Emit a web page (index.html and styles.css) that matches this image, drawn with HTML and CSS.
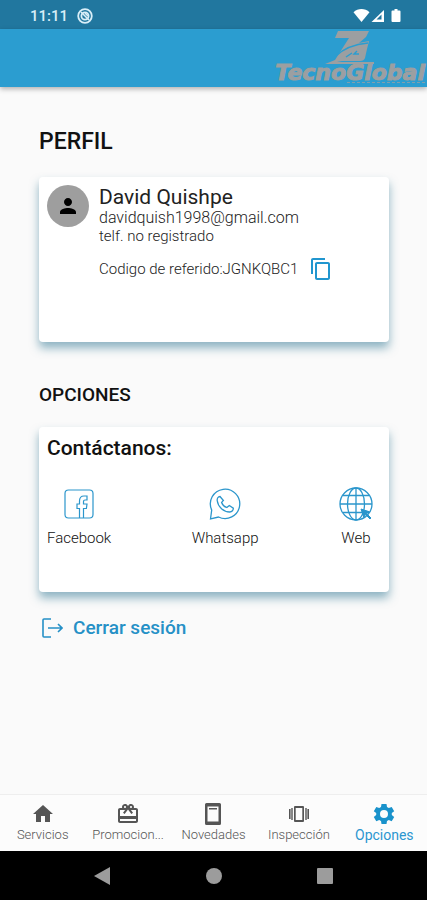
FILE: index.html
```html
<!DOCTYPE html>
<html lang="es">
<head>
<meta charset="utf-8">
<meta name="viewport" content="width=device-width, initial-scale=1">
<title>TecnoGlobal</title>
<link rel="stylesheet" href="styles.css">
</head>
<body>
<div class="status">
  <span class="clock">11:11</span>
  <svg class="status-dnd" viewBox="0 0 16 16" width="16" height="16" aria-hidden="true"><circle cx="8" cy="8" r="6.8" fill="none" stroke="currentColor" stroke-width="1.8"/><circle cx="8" cy="8" r="3.6" fill="none" stroke="currentColor" stroke-width="1.8"/><path d="M4 4l8 8M8 5l3 3" stroke="currentColor" stroke-width="1.6"/></svg>
  <svg class="status-icons" viewBox="0 0 48 16" width="48" height="16" aria-hidden="true"><path d="M.5 4.200C5-.1 12-.1 16.500 4.200L8.500 14z" fill="currentColor"/><path d="M31 2v12H18.500z" fill="currentColor"/><path d="M28.500 6.500v5h-5z" fill="#21779f"/><path d="M39.500 2.500h2V1h3v1.500h2q1 0 1 1V13q0 1-1 1h-7q-1 0-1-1V3.500q0-1 1-1z" fill="currentColor"/></svg>
</div>
<header class="appbar">
  <div class="brand">
    <svg class="brand-mark" viewBox="0 0 52 34" width="52" height="34" aria-hidden="true"><path fill="currentColor" d="M14 1h31l-3 6-7 6 10-2-2 8-2 9q-1 3-5 3H18l-5 1h37v2H1l10-4 14-22H11z"/><path d="M12 26Q23 15 44 13M33 21l-3 3h5M22 27l6-4" fill="none" stroke="#2b9dd0" stroke-width="1.400"/></svg>
    <span class="brand-name">TecnoGlobal</span>
    <span class="brand-line" aria-hidden="true"></span>
  </div>
</header>
<main class="content">
  <h1 class="title">PERFIL</h1>
  <section class="card profile">
    <div class="avatar"><svg viewBox="0 0 24 24" width="24" height="24" aria-hidden="true"><path fill="currentColor" d="M12 12c2.210 0 4-1.790 4-4s-1.790-4-4-4-4 1.790-4 4 1.790 4 4 4zm0 2c-2.670 0-8 1.340-8 4v2h16v-2c0-2.660-5.330-4-8-4z"/></svg></div>
    <div class="details">
      <div class="name">David Quishpe</div>
      <div class="email">davidquish1998@gmail.com</div>
      <div class="phone">telf. no registrado</div>
      <div class="referral"><span>Codigo de referido:JGNKQBC1</span>
        <button class="copy" aria-label="Copiar código"><svg viewBox="0 0 24 24" width="24" height="24" aria-hidden="true"><path fill="currentColor" d="M16 1H4c-1.100 0-2 .9-2 2v14h2V3h12V1zm3 4H8c-1.100 0-2 .9-2 2v14c0 1.100.9 2 2 2h11c1.100 0 2-.9 2-2V7c0-1.100-.9-2-2-2zm0 16H8V7h11v14z"/></svg></button>
      </div>
    </div>
  </section>
  <h2 class="subtitle">OPCIONES</h2>
  <section class="card contact">
    <h3 class="contact-title">Contáctanos:</h3>
    <div class="links">
      <a class="link" href="#facebook"><svg viewBox="0 0 34 34" width="34" height="34" fill="none" stroke="currentColor" stroke-width="1.200" aria-hidden="true"><rect x="3" y="3" width="28" height="28" rx="3.500"/><path d="M17.500 31V21.500H15V17h2.500v-3c0-3.500 2-5 4.500-5h3v4h-2c-1 0-1.500.5-1.500 1.500V17H25l-.6 4.500h-2.900V31"/></svg><span>Facebook</span></a>
      <a class="link" href="#whatsapp"><svg viewBox="0 0 34 34" width="34" height="34" fill="none" stroke="currentColor" stroke-width="1.300" aria-hidden="true"><path d="M2.500 32l1.200-9A14.700 14.700 0 1 1 10.500 30z"/><path d="M12 9.500c-2 0-3 2-2.800 4 .8 6.500 6.500 11.500 12.600 11.500 2.200 0 3.700-2 3.500-3.800l-4-2.700-2.500 2c-2.500-.8-4.300-2.700-5.200-5.100l1.800-1.900z"/></svg><span>Whatsapp</span></a>
      <a class="link" href="#web"><svg viewBox="0 0 34 34" width="34" height="34" fill="none" stroke="currentColor" stroke-width="1.300" aria-hidden="true"><circle cx="17" cy="17" r="16"/><ellipse cx="17" cy="17" rx="8.500" ry="16"/><path d="M17 1v32M1 17h32M4 8.500h26M4 25.500h26"/><path d="M22 22l8.500 2.800-3 1.700 4.500 4.500-1 1-4.500-4.500-1.700 3z" fill="currentColor" stroke-width="1"/></svg><span>Web</span></a>
    </div>
  </section>
  <a class="logout" href="#salir"><svg viewBox="0 0 24 24" width="24" height="24" fill="none" stroke="currentColor" stroke-width="1.600" aria-hidden="true"><path d="M12 3H5Q4 3 4 4v16q0 1 1 1h7M9 12h14M19 8l4 4-4 4"/></svg><span>Cerrar sesión</span></a>
</main>
<nav class="tabs">
  <a class="tab" href="#servicios"><svg viewBox="0 0 24 24" width="24" height="24" aria-hidden="true"><path fill="currentColor" d="M10 20v-6h4v6h5v-8h3L12 3 2 12h3v8z"/></svg><span>Servicios</span></a>
  <a class="tab" href="#promociones"><svg viewBox="0 0 24 24" width="24" height="24" aria-hidden="true"><path fill="currentColor" d="M20 6h-2.180c.11-.31.180-.65.180-1 0-1.660-1.340-3-3-3-1.050 0-1.960.54-2.500 1.350l-.5.670-.5-.68C10.960 2.540 10.050 2 9 2 7.340 2 6 3.340 6 5c0 .35.070.69.180 1H4c-1.110 0-1.990.89-1.990 2L2 19c0 1.110.89 2 2 2h16c1.110 0 2-.89 2-2V8c0-1.110-.89-2-2-2zm-5-2c.55 0 1 .45 1 1s-.45 1-1 1-1-.45-1-1 .45-1 1-1zM9 4c.55 0 1 .45 1 1s-.45 1-1 1-1-.45-1-1 .45-1 1-1zm11 15H4v-2h16v2zm0-5H4V8h5.080L7 10.830 8.620 12 12 7.400l3.380 4.600L17 10.830 14.920 8H20v6z"/></svg><span>Promocion...</span></a>
  <a class="tab" href="#novedades"><svg viewBox="0 0 24 24" width="24" height="24" aria-hidden="true"><path fill="currentColor" fill-rule="evenodd" d="M5.500 1h13q1.500 0 1.500 1.500v19q0 1.500-1.500 1.500h-13Q4 23 4 21.500v-19Q4 1 5.500 1zM6.500 4.500v15h11v-15zM8 6h8v1.500H8z"/></svg><span>Novedades</span></a>
  <a class="tab" href="#inspeccion"><svg viewBox="0 0 24 24" width="24" height="24" aria-hidden="true"><path fill="currentColor" fill-rule="evenodd" d="M2 7h1.600v10H2zM4.300 6h1.400v12H4.300zM18.300 6h1.400v12h-1.400zM20.400 7H22v10h-1.600zM8 4h8q1 0 1 1v14q0 1-1 1H8q-1 0-1-1V5q0-1 1-1zm.7 2v12h6.600V6z"/></svg><span>Inspección</span></a>
  <a class="tab active" href="#opciones"><svg viewBox="0 0 24 24" width="24" height="24" aria-hidden="true"><path fill="currentColor" fill-rule="evenodd" d="M9.500 2h5l.5 3 1.800 1 2.900-1.100 2.500 4.300-2.400 1.900v1.900l2.400 1.900-2.500 4.300-2.900-1.200-1.800 1-.5 3h-5l-.5-3-1.800-1-2.900 1.200-2.500-4.300L4.200 13v-1.900L1.800 9.200l2.500-4.300L7.200 6 9 5zM12 8a4 4 0 1 0 0 8 4 4 0 0 0 0-8z"/></svg><span>Opciones</span></a>
</nav>
<div class="sysnav">
  <button aria-label="Atrás"><svg viewBox="0 0 18 18" width="18" height="18" aria-hidden="true"><path d="M0 9L16 0v18z" fill="currentColor"/></svg></button>
  <button aria-label="Inicio"><svg viewBox="0 0 18 18" width="18" height="18" aria-hidden="true"><circle cx="9" cy="9" r="8" fill="currentColor"/></svg></button>
  <button aria-label="Recientes"><svg viewBox="0 0 18 18" width="18" height="18" aria-hidden="true"><rect x="1" y="1" width="16" height="16" rx="1" fill="currentColor"/></svg></button>
</div>
</body>
</html>
```
FILE: styles.css
```css
* { box-sizing: border-box; }
body {
  margin: 0;
  min-height: 100vh;
  display: flex;
  flex-direction: column;
  background: #fafafa;
  color: #111;
  font-family: Roboto, "Liberation Sans", sans-serif;
}
a { color: inherit; text-decoration: none; }
button { border: 0; padding: 0; background: none; color: inherit; display: flex; }
h1, h2, h3 { margin: 0; font-weight: 500; }
svg { display: block; flex: none; }

.status {
  display: flex;
  align-items: center;
  height: 29px;
  padding: 3px 26px 0 30px;
  background: #21779f;
  color: #fff;
}
.clock { font-size: 15px; font-weight: 500; color: #d9eef8; }
.status-dnd { margin-left: 9px; color: #d9eef8; }
.status-icons { margin-left: auto; }

.appbar {
  display: flex;
  justify-content: flex-end;
  height: 58px;
  padding-right: 2px;
  background: #2b9dd0;
  box-shadow: 0 2px 5px rgba(0, 0, 0, .3);
}
.brand {
  display: flex;
  flex-direction: column;
  align-items: center;
  color: #9c9fa1;
}
.brand-mark { margin-top: 1px; }
.brand-name {
  font: italic 700 22px/18px "DejaVu Sans", sans-serif;
  -webkit-text-stroke: 1px currentColor;
}
.brand-line { align-self: flex-end; width: 52%; border-top: 1px dashed #7f9fae; }

.content {
  flex: 1;
  padding: 40px 38px 24px 39px;
}
.title { font-size: 23px; line-height: 30px; }
.card {
  min-height: 165px;
  padding: 8px;
  border-radius: 4px;
  background: #fff;
  box-shadow: 0 6px 10px rgba(33, 110, 140, .5);
}
.profile { display: flex; gap: 10px; margin-top: 20px; }
.avatar {
  display: grid;
  place-items: center;
  flex: none;
  width: 42px;
  height: 42px;
  border-radius: 50%;
  background: #9e9e9e;
  color: #000;
}
.details { font-weight: 300; color: #222; }
.name { font-size: 21px; line-height: 24px; font-weight: 400; }
.email { font-size: 16px; line-height: 18px; }
.phone { font-size: 15px; line-height: 18px; }
.referral { display: flex; align-items: center; gap: 11px; margin-top: 12px; font-size: 15px; }
.copy { color: #2196cf; }

.subtitle { margin-top: 40px; font-size: 19px; line-height: 26px; }
.contact { margin-top: 19px; }
.contact-title { font-size: 21px; line-height: 26px; }
.links { display: flex; justify-content: space-between; margin-top: 26px; padding-right: 8px; }
.link {
  display: flex;
  flex-direction: column;
  align-items: center;
  gap: 8px;
  font-size: 15px;
  font-weight: 300;
  line-height: 18px;
  color: #111;
}
.link svg { color: #2b96cc; }
.logout {
  display: inline-flex;
  align-items: center;
  gap: 10px;
  margin-top: 24px;
  font-size: 19px;
  font-weight: 500;
  line-height: 24px;
  color: #2590c6;
}

.tabs {
  display: grid;
  grid-template-columns: repeat(5, minmax(0, 1fr));
  height: 57px;
  padding-top: 7px;
  background: #fcfcfc;
  border-top: 1px solid #eee;
}
.tab {
  display: flex;
  flex-direction: column;
  align-items: center;
  font-size: 13px;
  font-weight: 300;
  line-height: 18px;
  color: #555;
}
.tab span { white-space: nowrap; }
.tab.active { font-size: 14px; font-weight: 400; color: #2b96d0; }
.tab.active svg { color: #1992cb; }
.sysnav {
  display: flex;
  justify-content: center;
  align-items: center;
  gap: 93px;
  height: 49px;
  background: #000;
  color: #9c9c9c;
}
```
